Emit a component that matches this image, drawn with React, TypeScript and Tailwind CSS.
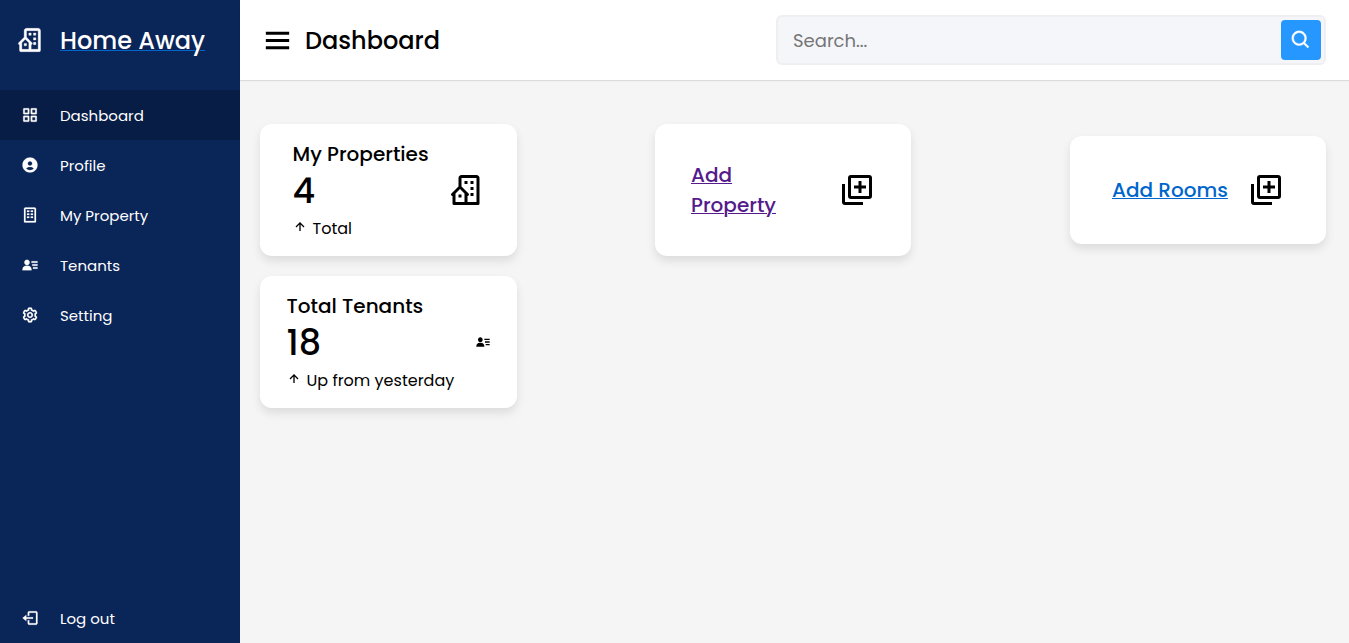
import type { ReactNode } from "react";
import type { IconType } from "react-icons";
import {
  BiBuildingHouse,
  BiGridAlt,
  BiSolidUserCircle,
  BiBuilding,
  BiSolidUserDetail,
  BiCog,
  BiLogOut,
  BiMenu,
  BiSearch,
  BiUpArrowAlt,
} from "react-icons/bi";

const links: { label: string; icon: IconType }[] = [
  { label: "Dashboard", icon: BiGridAlt },
  { label: "Profile", icon: BiSolidUserCircle },
  { label: "My Property", icon: BiBuilding },
  { label: "Tenants", icon: BiSolidUserDetail },
  { label: "Setting", icon: BiCog },
];

function NavItem({ label, icon: Icon, active = false }: { label: string; icon: IconType; active?: boolean }) {
  return (
    <li className={`flex h-[50px] items-center ${active ? "bg-[#081d45]" : ""}`}>
      <span className="flex w-[60px] justify-center">
        <Icon size={18} className="stroke-[0.3]" />
      </span>
      <span className="pt-0.5 text-[15px]">{label}</span>
    </li>
  );
}

function AddIcon() {
  return (
    <svg viewBox="0 0 24 24" className="size-9 shrink-0" fill="none" stroke="currentColor" strokeWidth="2">
      <rect x="7" y="3" width="14" height="14" rx="1" />
      <path d="M3 8v12a1 1 0 0 0 1 1h12" />
      <path d="M14 6v8M10 10h8" />
    </svg>
  );
}

function Card({ className, children }: { className: string; children: ReactNode }) {
  return (
    <div className={`flex shrink-0 items-center justify-between rounded-xl bg-white shadow-[0_5px_10px_rgba(0,0,0,0.1)] ${className}`}>
      {children}
    </div>
  );
}

function Stat({ title, value, note }: { title: string; value: string; note: string }) {
  return (
    <div>
      <div className="text-[20px] leading-[30px] font-medium whitespace-nowrap">{title}</div>
      <div className="pt-px text-[35px] leading-[42px] font-medium">{value}</div>
      <div className="mt-[5px] flex h-6 items-center">
        <BiUpArrowAlt size={16} className="mr-[4.5px] mb-1 -ml-[0.5px]" />
        <span className="text-[16px] whitespace-nowrap">{note}</span>
      </div>
    </div>
  );
}

export default function App() {
  return (
    <div className="flex h-[643px] w-full overflow-hidden bg-[#f5f5f5] font-[Poppins,Inter,sans-serif] text-black">
      <aside className="flex w-60 shrink-0 flex-col bg-[#0a2558] text-white">
        <div className="flex h-20 items-center">
          <span className="flex w-[60px] justify-center">
            <BiBuildingHouse size={28} className="stroke-[0.3]" />
          </span>
          <a className="pt-0.5 text-[24px] font-medium underline decoration-[#0066cc] decoration-1 underline-offset-1">Home Away</a>
        </div>
        <ul className="mt-2.5 flex flex-1 flex-col">
          {links.map((link, i) => (
            <NavItem key={link.label} {...link} active={i === 0} />
          ))}
          <li className="flex-1" />
          <NavItem label="Log out" icon={BiLogOut} />
        </ul>
      </aside>

      <main className="flex min-w-0 flex-1 flex-col">
        <header className="flex h-20 shrink-0 items-center bg-white pr-[23px] pl-5 shadow-[0_1px_1px_rgba(0,0,0,0.1)]">
          <BiMenu size={35} />
          <h1 className="ml-2.5 pt-0.5 text-[24px] font-medium">Dashboard</h1>
          <div className="ml-auto flex h-[50px] w-[550px] items-center justify-between rounded-md border-2 border-[#efeef1] bg-[#f5f6fa] pr-[3px] pl-[15px]">
            <input className="min-w-0 flex-1 bg-transparent text-[18px] outline-none placeholder:text-[#757575]" placeholder="Search..." />
            <button className="flex size-10 items-center justify-center rounded bg-[#2697ff] text-white">
              <BiSearch size={22} className="stroke-[0.4]" />
            </button>
          </div>
        </header>

        <section className="flex flex-col gap-5 pt-11 pr-[23px] pl-5">
          <div className="flex items-center">
            <Card className="h-[132px] w-[257px] pr-[33px] pl-[32.5px]">
              <Stat title="My Properties" value="4" note="Total" />
              <BiBuildingHouse size={36} />
            </Card>
            <Card className="ml-[138px] h-[132px] w-[256px] px-9">
              <a className="w-[100px] text-[20px] leading-[30px] font-medium text-[#551a8b] underline decoration-1 underline-offset-1">Add Property</a>
              <AddIcon />
            </Card>
            <Card className="ml-auto h-[108px] w-[256px] px-[42px]">
              <a className="text-[20px] leading-[30px] font-medium whitespace-nowrap text-[#0066cc] underline decoration-1 underline-offset-1">Add Rooms</a>
              <AddIcon />
            </Card>
          </div>
          <Card className="h-[132px] w-[257px] pr-[26.5px] pl-[26.5px]">
            <Stat title="Total Tenants" value="18" note="Up from yesterday" />
            <BiSolidUserDetail size={16} />
          </Card>
        </section>
      </main>
    </div>
  );
}
